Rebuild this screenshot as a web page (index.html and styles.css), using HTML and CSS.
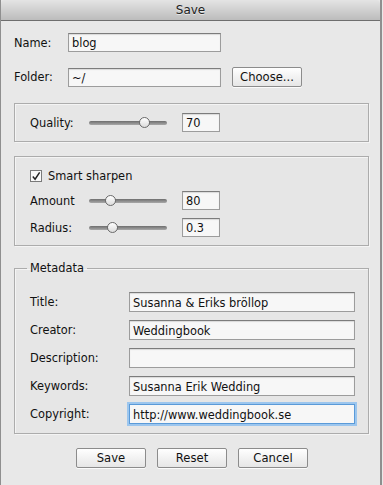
FILE: index.html
```html
<!DOCTYPE html>
<html lang="en">
<head>
  <meta charset="UTF-8">
  <meta name="viewport" content="width=device-width, initial-scale=1.0">
  <title>Save</title>
  <link rel="stylesheet" href="styles.css">
</head>
<body>
<div class="window">
  <div class="titlebar">Save</div>
  <form class="content" id="save-form">
    <div class="row">
      <label class="label-short" for="name">Name:</label>
      <input type="text" id="name" class="field field-wide" value="blog">
    </div>
    <div class="row row-folder">
      <label class="label-short" for="folder">Folder:</label>
      <input type="text" id="folder" class="field field-wide" value="~/">
      <button type="button" class="button choose">Choose...</button>
    </div>

    <div class="group group-quality">
      <div class="row">
        <span class="label-slider">Quality:</span>
        <div class="slider"><div class="track"></div><div class="knob" style="left: 70%"></div></div>
        <input type="text" class="field field-num" value="70">
      </div>
    </div>

    <div class="group group-sharpen">
      <label class="check">
        <span class="checkbox">
          <svg width="11" height="11" viewBox="0 0 11 11"><path d="M2 5.5 L4.5 8.5 L9.5 1" fill="none" stroke="#222" stroke-width="1.6"/></svg>
        </span>
        Smart sharpen
      </label>
      <div class="row">
        <span class="label-slider">Amount</span>
        <div class="slider"><div class="track"></div><div class="knob" style="left: 27%"></div></div>
        <input type="text" class="field field-num" value="80">
      </div>
      <div class="row">
        <span class="label-slider">Radius:</span>
        <div class="slider"><div class="track"></div><div class="knob" style="left: 30%"></div></div>
        <input type="text" class="field field-num" value="0.3">
      </div>
    </div>

    <fieldset class="metadata">
      <legend>Metadata</legend>
      <div class="row">
        <label class="label-meta" for="title">Title:</label>
        <input type="text" id="title" class="field field-meta" value="Susanna &amp; Eriks bröllop">
      </div>
      <div class="row">
        <label class="label-meta" for="creator">Creator:</label>
        <input type="text" id="creator" class="field field-meta" value="Weddingbook">
      </div>
      <div class="row">
        <label class="label-meta" for="description">Description:</label>
        <input type="text" id="description" class="field field-meta" value="">
      </div>
      <div class="row">
        <label class="label-meta" for="keywords">Keywords:</label>
        <input type="text" id="keywords" class="field field-meta" value="Susanna Erik Wedding">
      </div>
      <div class="row">
        <label class="label-meta" for="copyright">Copyright:</label>
        <input type="text" id="copyright" class="field field-meta focused" value="http://www.weddingbook.se">
      </div>
    </fieldset>

    <div class="button-group">
      <button type="submit" class="button">Save</button>
      <button type="reset" class="button">Reset</button>
      <button type="button" class="button">Cancel</button>
    </div>
  </form>
</div>
</body>
</html>
```

FILE: styles.css
```css
body {
  margin: 0;
  font-family: "DejaVu Sans", Verdana, sans-serif;
  font-size: 11.4px;
  color: #111;
  background-color: #e8e8e8;
}

.window {
  width: 382px;
  height: 485px;
  box-sizing: border-box;
  border-left: 1px solid #8f8f8f;
  border-right: 2px solid #8f8f8f;
  background-color: #e8e8e8;
}

.titlebar {
  height: 20px;
  line-height: 20px;
  text-align: center;
  font-size: 12px;
  color: #222;
  background: linear-gradient(#e4e4e4, #bcbcbc);
  border-bottom: 1px solid #6e6e6e;
  border-radius: 4px 4px 0 0;
  text-shadow: 0 1px 0 rgba(255, 255, 255, 0.6);
}

.content {
  padding: 12px 0 0 13px;
}

.row {
  display: flex;
  align-items: center;
}

.row-folder {
  margin-top: 15px;
}

.label-short {
  width: 54px;
}

.field {
  height: 19px;
  box-sizing: border-box;
  border: 1px solid #9c9c9c;
  border-top-color: #7c7c7c;
  background: #f7f7f7;
  font-family: inherit;
  font-size: 11.4px;
  padding: 1px 3px 0;
  color: #111;
  box-shadow: inset 0 1px 1px rgba(0, 0, 0, 0.12);
  outline: none;
}

.field-wide {
  width: 153px;
}

.field-num {
  width: 38px;
}

.field-meta {
  width: 226px;
  height: 20px;
}

.focused {
  border: 1px solid #5a9ad8;
  box-shadow: 0 0 0 2px #9cc6ee;
}

.button {
  height: 20px;
  box-sizing: border-box;
  border: 1px solid #8c8c8c;
  border-radius: 2px;
  background: linear-gradient(#ffffff, #f2f2f2 50%, #e6e6e6);
  font-family: inherit;
  font-size: 11.6px;
  color: #111;
  padding: 0;
  box-shadow: 0 1px 0 rgba(255, 255, 255, 0.8);
}

.choose {
  width: 70px;
  margin-left: 11px;
}

.group {
  width: 355px;
  box-sizing: border-box;
  border: 1px solid #acacac;
  box-shadow: inset 1px 1px 0 #f4f4f4, 1px 1px 0 #f4f4f4;
  background-color: #e6e6e6;
}

.group-quality {
  margin-top: 16px;
  padding: 9px 0 9px 15px;
}

.group-sharpen {
  margin-top: 14px;
  padding: 12px 0 8px 15px;
}

.group-sharpen .row {
  margin-top: 8px;
}

.label-slider {
  width: 59px;
}

.slider {
  position: relative;
  width: 78px;
  height: 12px;
  margin-right: 15px;
}

.track {
  position: absolute;
  left: 0;
  right: 0;
  top: 4px;
  height: 4px;
  border-radius: 2px;
  background: linear-gradient(#6e6e6e, #a9a9a9);
}

.knob {
  position: absolute;
  top: 0;
  width: 11px;
  height: 11px;
  margin-left: -5px;
  box-sizing: border-box;
  border: 1px solid #6a6a6a;
  border-radius: 50%;
  background: linear-gradient(#ffffff, #dcdcdc);
}

.check {
  display: flex;
  align-items: center;
  gap: 6px;
}

.checkbox {
  display: flex;
  width: 12px;
  height: 12px;
  box-sizing: border-box;
  border: 1px solid #7a7a7a;
  background: #fafafa;
  align-items: center;
  justify-content: center;
}

.metadata {
  width: 355px;
  box-sizing: border-box;
  margin: 15px 0 0;
  padding: 17px 0 9px 15px;
  border: 1px solid #acacac;
  box-shadow: inset 1px 1px 0 #f4f4f4, 1px 1px 0 #f4f4f4;
  background-color: #e6e6e6;
}

.metadata legend {
  padding: 0 3px;
  margin-left: -3px;
}

.metadata .row + .row {
  margin-top: 8px;
}

.label-meta {
  width: 99px;
}

.button-group {
  display: flex;
  gap: 11px;
  margin: 14px 0 0 62px;
}

.button-group .button {
  width: 70px;
}
```
